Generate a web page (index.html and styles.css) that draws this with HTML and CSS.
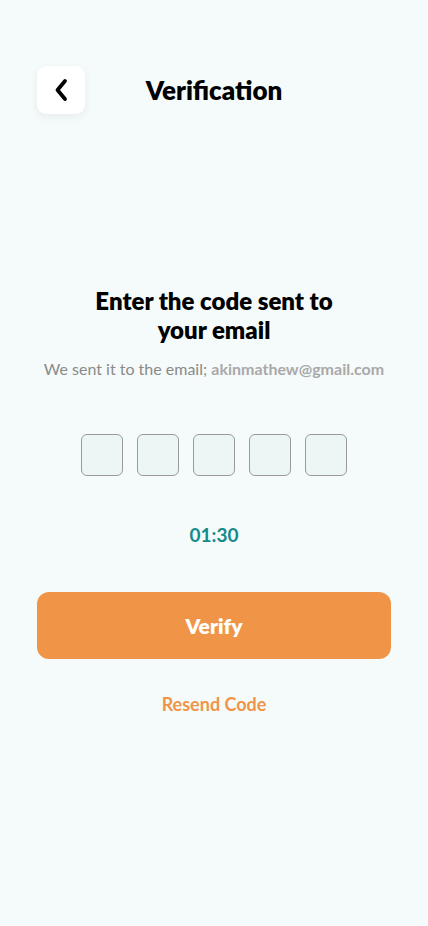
FILE: index.html
```html
<!DOCTYPE html>
<html>
<head>
<meta charset="utf-8">
<link rel="stylesheet" href="styles.css">
</head>
<body>
<div class="screen">
  <header class="topbar">
    <button class="back" aria-label="Back">
      <svg width="16" height="24" viewBox="0 0 16 24"><path d="M12 3 L4.5 12 L12 21" fill="none" stroke="#000" stroke-width="3.8" stroke-linecap="round" stroke-linejoin="round"/></svg>
    </button>
    <h1 class="title">Verification</h1>
  </header>
  <main class="content">
    <h2 class="heading">Enter the code sent to<br>your email</h2>
    <p class="sub">We sent it to the email; <b>akinmathew@gmail.com</b></p>
    <div class="otp">
      <div class="box"></div><div class="box"></div><div class="box"></div><div class="box"></div><div class="box"></div>
    </div>
    <div class="timer">01:30</div>
    <button class="verify">Verify</button>
    <div class="resend">Resend Code</div>
  </main>
</div>
</body>
</html>
```
FILE: styles.css
```css
* { box-sizing: border-box; }
html, body { margin: 0; padding: 0; }
body {
  background: #f5fafa;
  font-family: Lato, "Noto Sans", sans-serif;
  width: 428px;
  height: 926px;
}
.screen { padding: 66px 37px 0; }
.topbar {
  position: relative;
  height: 48px;
  display: flex;
  align-items: center;
  justify-content: center;
}
.back {
  position: absolute;
  left: 0;
  top: 0;
  width: 48px;
  height: 48px;
  border: none;
  border-radius: 9px;
  background: #fff;
  box-shadow: 0 3px 10px rgba(0,0,0,0.06);
  display: flex;
  align-items: center;
  justify-content: center;
  padding: 0;
}
.title {
  margin: 0;
  font-size: 26px;
  font-weight: 800;
  color: #000;
}
.content {
  display: flex;
  flex-direction: column;
  align-items: center;
  padding-top: 172px;
}
.heading {
  margin: 0;
  font-size: 24px;
  line-height: 29px;
  font-weight: 800;
  text-align: center;
  color: #000;
}
.sub {
  margin: 15px 0 0;
  font-size: 16px;
  color: #8a8a8a;
  white-space: nowrap;
}
.sub b { color: #a9a9a9; font-weight: 700; }
.otp {
  display: flex;
  gap: 14px;
  margin-top: 56px;
}
.box {
  width: 42px;
  height: 42px;
  border: 1px solid #999;
  border-radius: 6px;
  background: #ecf6f5;
}
.timer {
  margin-top: 47px;
  font-size: 19px;
  font-weight: 700;
  color: #148a8a;
}
.verify {
  margin-top: 46px;
  width: 354px;
  height: 67px;
  border: none;
  border-radius: 12px;
  background: #f09548;
  color: #fff;
  font-family: Lato, "Noto Sans", sans-serif;
  font-size: 21px;
  font-weight: 800;
}
.resend {
  margin-top: 34px;
  font-size: 18px;
  font-weight: 700;
  color: #f09548;
}
```
